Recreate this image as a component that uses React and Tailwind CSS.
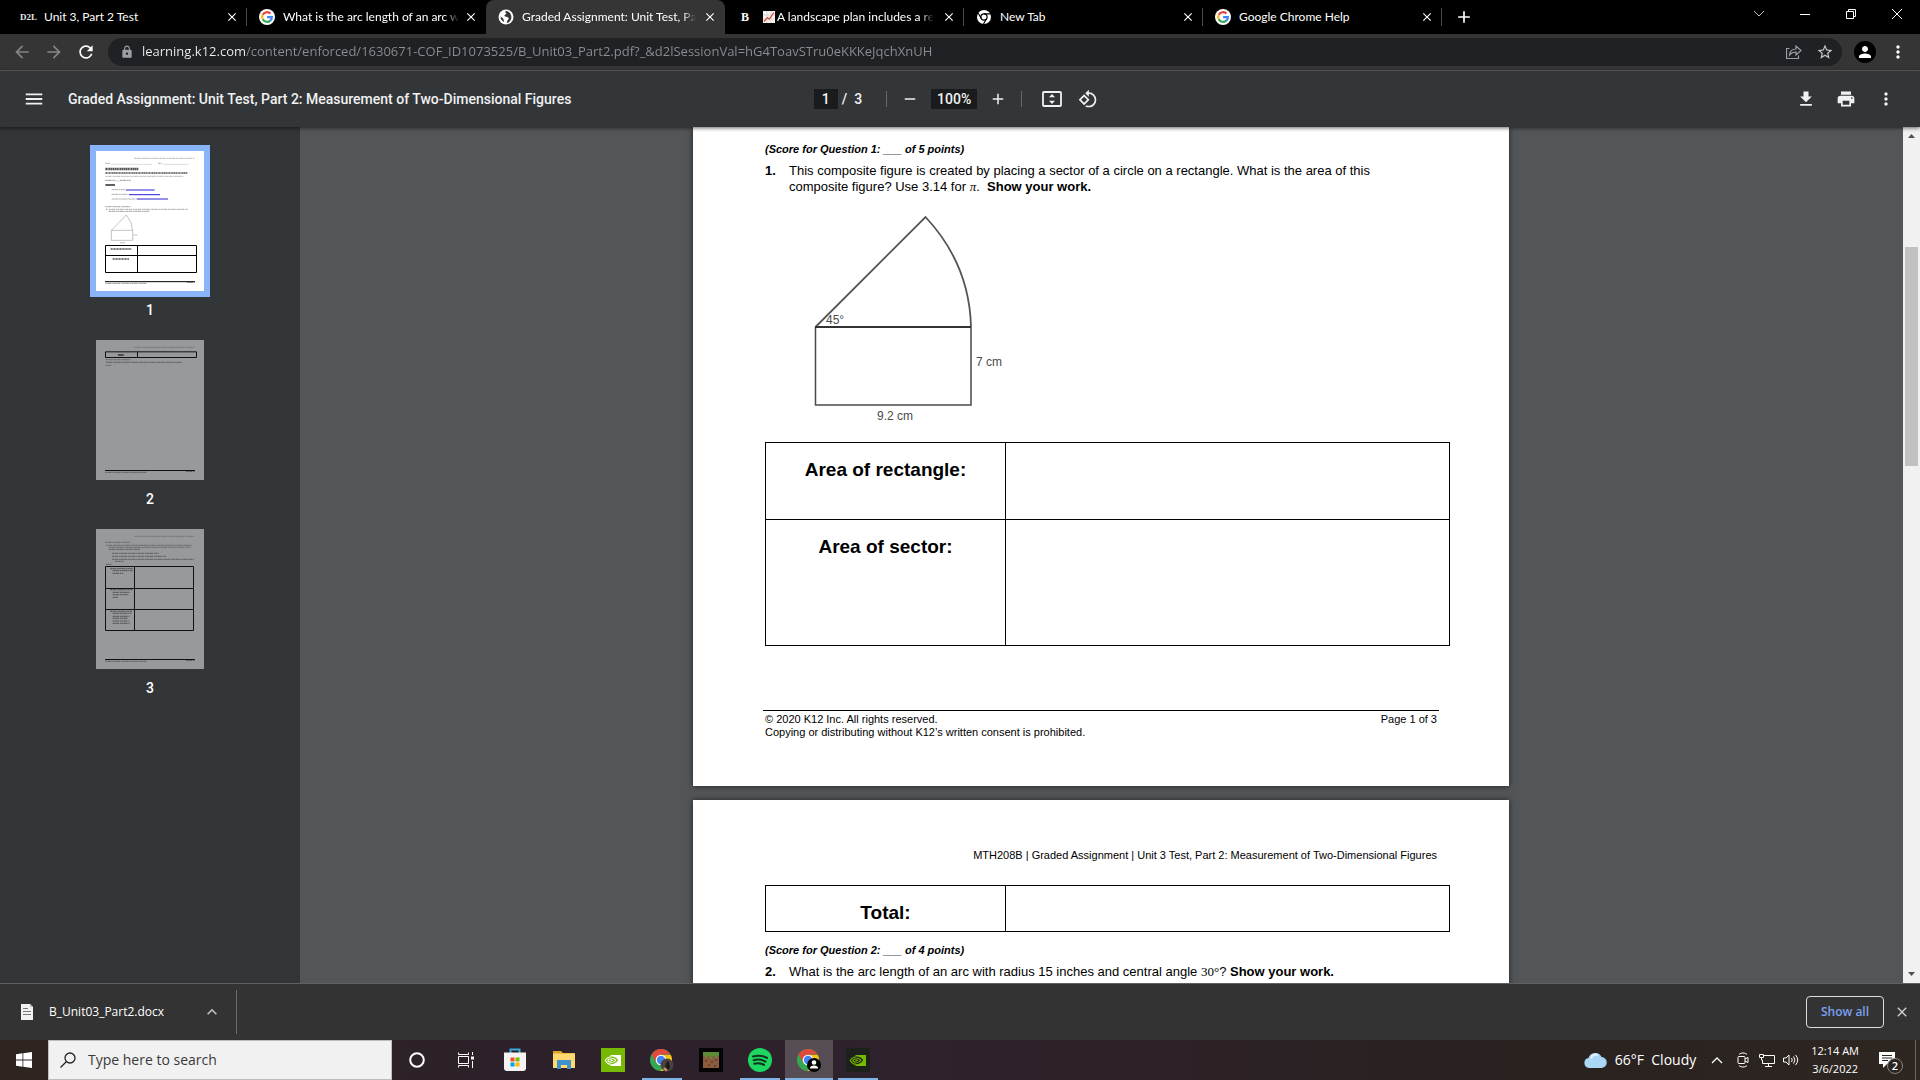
import React from "react";
import {
  MdAdd,
  MdArrowBack,
  MdArrowForward,
  MdClose,
  MdFileDownload,
  MdKeyboardArrowUp,
  MdLock,
  MdMenu,
  MdMoreVert,
  MdOutlineRotate90DegreesCcw,
  MdPerson,
  MdPrint,
  MdRefresh,
  MdRemove,
  MdStarBorder,
} from "react-icons/md";

const UI = "font-['Open_Sans','Noto_Sans',sans-serif]";
const DOC = "font-['Liberation_Sans',Arial,sans-serif]";
const ROBOTO = "font-[Roboto,sans-serif]";

/* ---------- favicons ---------- */

function GoogleIcon() {
  return (
    <svg viewBox="0 0 16 16" className="size-4 shrink-0" aria-hidden="true">
      <circle cx="8" cy="8" r="8" fill="#fff" />
      <g fill="none" strokeWidth="2.1">
        <path d="M11.5 4.6A4.9 4.9 0 0 0 3.7 5.7" stroke="#ea4335" />
        <path d="M3.7 5.7a4.9 4.9 0 0 0 0 4.6" stroke="#fbbc05" />
        <path d="M3.7 10.3a4.9 4.9 0 0 0 7.6 1.3" stroke="#34a853" />
        <path d="M11.3 11.6A4.9 4.9 0 0 0 12.9 8.1H8.1" stroke="#4285f4" />
      </g>
    </svg>
  );
}

function GlobeIcon() {
  return (
    <svg viewBox="0 0 16 16" className="size-4 shrink-0" aria-hidden="true">
      <circle cx="8" cy="8" r="7.5" fill="#fff" />
      <path
        d="M8.6 2c-2 .6-1.4 1.6-.5 2.2.8.6-.8 1.3-1.5 2.1-.6.8.3 1.3 1.4 1.4 1.8.1 2.9 1 2.6 2.3-.3 1.1-1.5 1.3-1.6 2.4l-.2 1.5c2.6-.4 4.6-2.6 4.6-5.6 0-3.2-2-5.7-4.8-6.3zM2.6 7.4c1.2 1 2.4 1.3 2.7 2.4.3 1.2.8 1.8.7 3.2-2.3-.9-3.7-3-3.400-5.600z"
        fill="#35363a"
      />
    </svg>
  );
}

function ChromeMono() {
  return (
    <svg viewBox="0 0 16 16" className="size-4 shrink-0" aria-hidden="true">
      <circle cx="8" cy="8" r="7" fill="#fff" />
      <circle cx="8" cy="8" r="3.1" fill="none" stroke="#000" strokeWidth="1.2" />
      <path d="M8 4.900h6.500M5.300 9.500 2.100 4M10.700 9.500 7.500 15" stroke="#000" strokeWidth="1.2" />
    </svg>
  );
}

function D2LIcon() {
  return (
    <span className="w-4 shrink-0 text-center font-['Liberation_Serif',serif] text-[9px] leading-4 font-bold text-gray-200">
      D2L
    </span>
  );
}

function BartlebyIcon() {
  return (
    <span className="w-4 shrink-0 text-center font-['Liberation_Serif',serif] text-xs leading-4 font-bold text-white">
      B
    </span>
  );
}

function ChartIcon() {
  return (
    <svg viewBox="0 0 12 12" className="mr-0.5 ml-0.5 inline-block size-3 align-[-2px]" aria-hidden="true">
      <rect width="12" height="12" fill="#f4f1ee" />
      <path d="M0 4h12M0 8h12M4 0v12M8 0v12" stroke="#c9cfd4" strokeWidth=".6" />
      <path d="m1 10.500 3.500-4 1.800 1.600L11 1.500" fill="none" stroke="#d8452f" strokeWidth="1.2" />
    </svg>
  );
}

/* ---------- browser frame ---------- */

const tabs = [
  { icon: <D2LIcon />, title: "Unit 3, Part 2 Test" },
  { icon: <GoogleIcon />, title: "What is the arc length of an arc w", fade: true },
  { icon: <GlobeIcon />, title: "Graded Assignment: Unit Test, Pa", active: true, fade: true },
  { icon: <BartlebyIcon />, title: "A landscape plan includes a re", emoji: true, fade: true },
  { icon: <ChromeMono />, title: "New Tab" },
  { icon: <GoogleIcon />, title: "Google Chrome Help" },
];

function Tab({ tab, divider }) {
  return (
    <div
      className={
        "flex h-full w-[239px] items-center pr-2 pl-3 " +
        (tab.active ? "rounded-t-lg bg-[#353535] " : "") +
        (divider ? "bg-[linear-gradient(#4a4a4a,#4a4a4a)] bg-[length:1px_18px] bg-right bg-no-repeat" : "")
      }
    >
      <button className="flex min-w-0 flex-1 items-center gap-2 text-left font-[Lato,'Open_Sans',sans-serif] text-xs text-white">
        {tab.icon}
        <span className={"whitespace-nowrap " + (tab.fade ? "mask-r-from-92%" : "")}>
          {tab.emoji && <ChartIcon />}
          {tab.title}
        </span>
      </button>
      <button aria-label={"Close " + tab.title} className="text-sm text-white">
        <MdClose />
      </button>
    </div>
  );
}

function TabStrip() {
  return (
    <header className="flex h-[34px] shrink-0 bg-black pl-2 text-white">
      {tabs.map((t, i) => (
        <Tab key={i} tab={t} divider={i !== 1 && i !== 2} />
      ))}
      <button aria-label="New tab" className="ml-3 text-xl">
        <MdAdd />
      </button>
      <div className="ml-auto flex h-7">
        <button aria-label="Search tabs" className="flex w-[46px] items-center justify-center">
          <svg viewBox="0 0 12 12" className="size-3" fill="none" stroke="#bbb">
            <path d="m1 3 5 5 5-5" />
          </svg>
        </button>
        <button aria-label="Minimize" className="flex w-[46px] items-center justify-center">
          <svg viewBox="0 0 10 10" className="size-2.5" fill="none" stroke="#fff">
            <path d="M0 5.500h10" />
          </svg>
        </button>
        <button aria-label="Restore" className="flex w-[46px] items-center justify-center">
          <svg viewBox="0 0 10 10" className="size-2.5" fill="none" stroke="#fff">
            <path d="M.5 2.500h7v7h-7zM2.500 2.500v-2h7v7h-2" />
          </svg>
        </button>
        <button aria-label="Close window" className="flex w-[46px] items-center justify-center">
          <svg viewBox="0 0 10 10" className="size-2.5" fill="none" stroke="#fff">
            <path d="m0 0 10 10M10 0 0 10" />
          </svg>
        </button>
      </div>
    </header>
  );
}

function AddressBar() {
  return (
    <div className="flex h-[37px] shrink-0 items-center border-b border-[#5f6163] bg-[#353535]">
      <div className="flex w-[108px] items-center gap-3 pl-3 text-xl">
        <button aria-label="Back" className="text-[#858585]">
          <MdArrowBack />
        </button>
        <button aria-label="Forward" className="text-[#858585]">
          <MdArrowForward />
        </button>
        <button aria-label="Reload" className="text-white">
          <MdRefresh />
        </button>
      </div>
      <div className="flex h-7 flex-1 items-center rounded-full bg-[#202124] pr-2 pl-3 text-[#9aa0a6]">
        <MdLock className="text-sm" />
        <input
          aria-label="Address"
          className="ml-2 flex-1 bg-[linear-gradient(to_right,#f1f3f4_104px,#8b8e92_104px)] bg-clip-text text-[13px] text-transparent outline-none"
          defaultValue="learning.k12.com/content/enforced/1630671-COF_ID1073525/B_Unit03_Part2.pdf?_&d2lSessionVal=hG4ToavSTru0eKKKeJqchXnUH"
        />
        <button aria-label="Share" className="mr-3.5">
          <svg viewBox="0 0 16 16" className="size-4" fill="none" stroke="currentColor" strokeWidth="1.2">
            <path d="M3.500 4.500h-3v10h12v-3" />
            <path d="M3.500 11c.3-4 2.500-6 6.500-6V2l5 4.500-5 4.500V8C7 8 5 9 3.500 11z" />
          </svg>
        </button>
        <button aria-label="Bookmark" className="text-lg text-[#c4c7ca]">
          <MdStarBorder />
        </button>
      </div>
      <button
        aria-label="Profile"
        className="ml-3 flex size-5.5 items-center justify-center rounded-full bg-black text-lg text-white"
      >
        <MdPerson />
      </button>
      <button aria-label="Chrome menu" className="mr-3 ml-3 text-xl text-white">
        <MdMoreVert />
      </button>
    </div>
  );
}

function PdfToolbar() {
  return (
    <div
      className={
        ROBOTO +
        " z-10 grid h-14 shrink-0 grid-cols-[1fr_auto_1fr] items-center bg-[#323639] text-sm font-medium text-[#f1f1f1] shadow-[0_1px_4px_rgba(0,0,0,0.6)]"
      }
    >
      <div className="flex items-center pl-[23px]">
        <button aria-label="Toggle sidebar" className="text-[22px]">
          <MdMenu />
        </button>
        <h1 className="ml-[23px]">Graded Assignment: Unit Test, Part 2: Measurement of Two-Dimensional Figures</h1>
      </div>
      <div className="flex items-center pr-2">
        <input aria-label="Page" className="h-5 w-6 bg-[#191b1c] text-center" defaultValue="1" />
        <span className="mr-6 ml-1">/&nbsp; 3</span>
        <span className="h-4 w-px bg-[#66696b]" />
        <button aria-label="Zoom out" className="ml-3.5 text-lg">
          <MdRemove />
        </button>
        <input aria-label="Zoom" className="mx-3 h-5 w-[46px] bg-[#191b1c] text-center" defaultValue="100%" />
        <button aria-label="Zoom in" className="mr-3.5 text-lg">
          <MdAdd />
        </button>
        <span className="h-4 w-px bg-[#66696b]" />
        <button aria-label="Fit to page" className="ml-5">
          <svg viewBox="0 0 20 16" className="h-4 w-5" fill="none" stroke="currentColor" strokeWidth="1.8">
            <rect x="1" y="1" width="18" height="14" rx="1" />
            <path d="m10 3 3 3.200H7zM10 13l3-3.200H7z" fill="currentColor" stroke="none" />
          </svg>
        </button>
        <button aria-label="Rotate" className="ml-4 text-xl">
          <MdOutlineRotate90DegreesCcw />
        </button>
      </div>
      <div className="flex justify-end gap-5 pr-6 text-xl">
        <button aria-label="Download">
          <MdFileDownload />
        </button>
        <button aria-label="Print">
          <MdPrint />
        </button>
        <button aria-label="More actions">
          <MdMoreVert />
        </button>
      </div>
    </div>
  );
}

/* ---------- thumbnails ---------- */

function TinyLines({ lines }) {
  return lines.map(([x1, x2, y, w, color, dash], i) => (
    <path
      key={i}
      d={`M${x1} ${y}H${x2}`}
      stroke={color || "#444"}
      strokeWidth={w || 2}
      strokeDasharray={dash || "7 1 11 2 4 1"}
    />
  ));
}

function Thumb1() {
  return (
    <svg viewBox="48 63 324 420" className="block w-full bg-white" fill="none">
      <TinyLines
        lines={[
          [162, 343, 85, 1.5, "#777"],
          [76, 90, 100, 2, "#888"],
          [94, 216, 103, 1, "#999", "none"],
          [234, 245, 100, 2, "#888"],
          [248, 326, 103, 1, "#999", "none"],
          [76, 176, 117, 7, "#555", "5 1 4 1"],
          [76, 323, 129, 5, "#555", "5 1 3 1"],
          [76, 311, 139, 2, "#999"],
          [76, 106, 151, 2, "#666"],
          [108, 118, 153, 1, "#777", "none"],
          [120, 152, 151, 2, "#666"],
          [76, 105, 165, 4, "#111", "none"],
          [95, 136, 179, 2, "#888"],
          [95, 145, 193, 2, "#888"],
          [95, 168, 207, 2, "#888"],
          [138, 224, 180, 3, "#2a20d0", "none"],
          [147, 240, 194, 3, "#2a20d0", "none"],
          [170, 264, 207, 3, "#2a20d0", "none"],
          [76, 152, 230, 2, "#777"],
          [78, 82, 238, 2, "#444"],
          [86, 324, 238, 2, "#888"],
          [86, 208, 244, 2, "#777"],
          [120, 135, 338, 2, "#999"],
          [160, 172, 315, 2, "#999"],
          [92, 154, 357, 5, "#555", "4 1 3 1"],
          [98, 148, 387, 5, "#555", "4 1 3 1"],
          [76, 200, 460, 2, "#666"],
          [320, 344, 457, 2, "#555"],
        ]}
      />
      <path d="M94 331v-30h64v30zM94 301l45-46q17 20 19 46" stroke="#888" strokeWidth="1.5" />
      <path d="M76.500 346.500h273v81h-273zM76 376.500h274M172.500 346v81" stroke="#000" strokeWidth="3" />
      <path d="M75 455h270" stroke="#000" strokeWidth="3" />
    </svg>
  );
}

function Thumb2() {
  return (
    <svg viewBox="48 30 324 420" className="block w-full bg-[#98999b]" fill="none">
      <TinyLines
        lines={[
          [163, 343, 52, 1.5, "#555"],
          [114, 131, 75, 4, "#222", "none"],
          [76, 152, 89, 2, "#555"],
          [78, 308, 97, 2, "#444"],
          [76, 94, 106, 2, "#555"],
          [76, 200, 427, 2, "#444"],
          [318, 344, 424, 2, "#333"],
        ]}
      />
      <path d="M76.500 65.500h273v17h-273zM172.500 65v17M75 421.500h270" stroke="#111" strokeWidth="3" />
    </svg>
  );
}

function Thumb3() {
  return (
    <svg viewBox="48 597 324 420" className="block w-full bg-[#98999b]" fill="none">
      <TinyLines
        lines={[
          [163, 343, 619, 1.5, "#555"],
          [76, 152, 637, 2, "#555"],
          [78, 336, 646, 2, "#555"],
          [86, 332, 652, 2, "#555"],
          [86, 180, 658, 2, "#444"],
          [96, 236, 670, 2, "#444"],
          [96, 258, 679, 2, "#444"],
          [96, 341, 688, 2, "#444"],
          [105, 132, 694, 2, "#444"],
          [78, 94, 703, 2, "#444"],
          [90, 158, 716, 2, "#333"],
          [98, 160, 722, 2, "#333"],
          [98, 130, 730, 2, "#333"],
          [90, 158, 779, 2, "#333"],
          [98, 150, 787, 2, "#333"],
          [98, 146, 794, 2, "#333"],
          [98, 114, 802, 2, "#333"],
          [90, 156, 844, 2, "#333"],
          [98, 154, 850, 2, "#333"],
          [98, 148, 859, 2, "#333"],
          [98, 142, 865, 2, "#333"],
          [98, 148, 873, 2, "#333"],
          [98, 150, 880, 2, "#333"],
          [76, 200, 994, 2, "#444"],
          [318, 344, 991, 2, "#333"],
        ]}
      />
      <path
        d="M76.500 709.500h264v192h-264zM76 775.500h265M76 838.500h265M163.500 709v192M75 988.500h270"
        stroke="#111"
        strokeWidth="3"
      />
    </svg>
  );
}

function Sidebar() {
  const thumbs = [Thumb1, Thumb2, Thumb3];
  return (
    <nav
      aria-label="Pages"
      className={ROBOTO + " flex w-[300px] shrink-0 flex-col items-center bg-[#323639] pt-[18px] text-sm font-medium text-white"}
    >
      {thumbs.map((Thumb, i) => (
        <button key={i} className="flex w-[120px] flex-col items-center gap-[3px] pb-3.5">
          <span className={"block w-full p-1.5 " + (i === 0 ? "bg-[#8ab4f8]" : "")}>
            <Thumb />
          </span>
          <span>{i + 1}</span>
        </button>
      ))}
    </nav>
  );
}

/* ---------- document ---------- */

function AnswerTable({ rows }) {
  return (
    <table className="w-[685px] border-collapse text-[19px] leading-6">
      <tbody>
        {rows.map(([label, height]) => (
          <tr key={label} className={height}>
            <th scope="row" className="w-[240px] border border-black pt-[15px] align-top font-bold">
              {label}
            </th>
            <td className="border border-black" />
          </tr>
        ))}
      </tbody>
    </table>
  );
}

function Figure() {
  return (
    <svg
      viewBox="0 0 200 220"
      className={DOC + " mt-[15px] ml-[46px] block h-[220px] w-[200px]"}
      fill="none"
      stroke="#4a4a4a"
      strokeWidth="1.5"
      role="img"
      aria-label="Sector on a rectangle"
    >
      <path d="M4.500 117 114.500 7q44 47 45.500 110" stroke="#555" strokeWidth="1.8" />
      <path d="M4.500 117v78H160v-78" />
      <path d="M4 117h156" stroke="#333" strokeWidth="2" />
      <g fill="#4a4a4a" stroke="none" fontSize="12">
        <text x="15" y="114">45°</text>
        <text x="165" y="156">7 cm</text>
        <text x="66" y="210">9.2 cm</text>
      </g>
    </svg>
  );
}

function Viewer() {
  return (
    <main className={DOC + " min-w-0 flex-1 overflow-hidden bg-[#525659] pr-px text-[13px] leading-4 text-black"}>
      <article className="mx-auto w-[816px] bg-white px-[72px] pt-3.5 pb-[47px] shadow-[0_0_6px_rgba(0,0,0,0.6)]">
        <p className="text-[11px] leading-4 font-bold italic">(Score for Question 1: ___ of 5 points)</p>
        <div className="mt-1.5 flex">
          <b className="w-6">1.</b>
          <p>
            This composite figure is created by placing a sector of a circle on a rectangle. What is the area of this
            <br />
            composite figure? Use 3.14 for <i className="font-['Liberation_Serif',serif]">π</i>.{" "}
            <b>&nbsp;Show your work.</b>
          </p>
        </div>
        <Figure />
        <div className="mt-3">
          <AnswerTable
            rows={[
              ["Area of rectangle:", "h-[77px]"],
              ["Area of sector:", "h-[126px]"],
            ]}
          />
        </div>
        <footer className="-mx-0.5 mt-16 flex justify-between border-t border-black px-0.5 pt-0.5 text-[11px] leading-[13px]">
          <p>
            © 2020 K12 Inc. All rights reserved.
            <br />
            Copying or distributing without K12’s written consent is prohibited.
          </p>
          <p>Page 1 of 3</p>
        </footer>
      </article>
      <article className="mx-auto mt-3.5 w-[816px] bg-white px-[72px] pt-[49px] pb-12 shadow-[0_0_6px_rgba(0,0,0,0.6)]">
        <p className="text-right text-[11px] leading-[13px]">
          MTH208B | Graded Assignment | Unit 3 Test, Part 2: Measurement of Two-Dimensional Figures
        </p>
        <div className="mt-[23px]">
          <AnswerTable rows={[["Total:", "h-[46px]"]]} />
        </div>
        <p className="mt-2.5 text-[11px] leading-4 font-bold italic">(Score for Question 2: ___ of 4 points)</p>
        <div className="mt-1.5 flex">
          <b className="w-6">2.</b>
          <p>
            What is the arc length of an arc with radius 15 inches and central angle{" "}
            <span className="font-['Liberation_Serif',serif]">30°</span>? <b>Show your work.</b>
          </p>
        </div>
      </article>
    </main>
  );
}

function Scrollbar() {
  return (
    <div className="flex w-[17px] shrink-0 flex-col items-center bg-[#f1f1f1]" aria-hidden="true">
      <svg viewBox="0 0 17 17" className="size-[17px] shrink-0" fill="#505050">
        <path d="M5 11h7L8.500 7z" />
      </svg>
      <div className="h-[12%] shrink-0" />
      <div className="h-[219px] w-[13px] bg-[#c1c1c1]" />
      <svg viewBox="0 0 17 17" className="mt-auto size-[17px] shrink-0" fill="#505050">
        <path d="M5 6h7l-3.500 4z" />
      </svg>
    </div>
  );
}

/* ---------- download shelf ---------- */

function DownloadShelf() {
  return (
    <div className="flex h-[57px] shrink-0 items-center border-t border-[#606060] bg-[#333] text-xs text-white">
      <div className="flex h-11 w-[237px] items-center border-r border-[#6b6b6b] pr-3.5 pl-5">
        <button className="flex flex-1 items-center gap-[15px] text-left">
          <svg viewBox="0 0 14 16" className="h-4 w-3.5" aria-hidden="true">
            <path d="M1 0h9l3 3v13H1z" fill="#f2f2f2" />
            <path d="M3 4.500h5M3 7.500h8M3 10.500h8" stroke="#777" />
            <path d="M10 0v3h3" fill="#bbb" />
          </svg>
          B_Unit03_Part2.docx
        </button>
        <button aria-label="Download options" className="text-xl text-[#bdbdbd]">
          <MdKeyboardArrowUp />
        </button>
      </div>
      <button className="mr-2.5 ml-auto h-8 w-[78px] rounded border border-[#dadce0] font-semibold text-[#7b9ff0]">
        Show all
      </button>
      <button aria-label="Close downloads" className="mr-2.5 text-base text-[#d0d0d0]">
        <MdClose />
      </button>
    </div>
  );
}

/* ---------- taskbar ---------- */

function ChromeColor({ children }) {
  return (
    <svg viewBox="0 0 24 24" className="size-6">
      <circle cx="11" cy="12" r="11" fill="#34a853" />
      <path d="M11 12 1.500 6.500A11 11 0 0 1 20.500 6.500H11z" fill="#e04a3c" />
      <path d="M1.500 6.500 6.200 14.800 11 12V6.500z" fill="#e04a3c" />
      <path d="M11 7h9.800A11 11 0 0 1 10.500 23L16 14z" fill="#fbc116" />
      <circle cx="11" cy="12" r="5.3" fill="#fff" />
      <circle cx="11" cy="12" r="4.2" fill="#4285f4" />
      {children}
    </svg>
  );
}

function NvidiaEye({ color, pupil }) {
  return (
    <>
      <path d="M9.500 7H20v11H9.500z" fill={color} />
      <g fill="none" strokeWidth="1.1">
        <path d="M9.500 9.200c3-.3 5.400 1 7 3-2 2.600-4 3.700-7 3.500" stroke={pupil} />
        <path d="M9.500 11c1.700-.1 2.800.4 3.800 1.400-1 1.200-2.200 1.700-3.800 1.600" stroke={pupil} />
        <path
          d="M9.500 8.700C7.300 9 5.400 10.300 4.200 12.200c1.200 2.400 3 3.800 5.300 4.200M9.500 10.800c-1.300.2-2.100.8-2.700 1.600.6 1.100 1.400 1.700 2.700 2"
          stroke={color}
        />
      </g>
    </>
  );
}

const apps = [
  {
    name: "Cortana",
    icon: (
      <svg viewBox="0 0 24 24" className="size-6">
        <circle cx="12" cy="12" r="6.8" fill="none" stroke="#fff" strokeWidth="2" />
      </svg>
    ),
  },
  {
    name: "Task View",
    icon: (
      <svg viewBox="0 0 16 16" className="size-4" fill="none" stroke="#fff">
        <path d="M.5 4.500h10v7H.5zM.5.500v2h10v-2M.5 15.500v-2h10v2M14.500 0v3M14.500 9v7" />
        <path d="M13 4.500h3v3h-3z" fill="#fff" stroke="none" />
      </svg>
    ),
  },
  {
    name: "Microsoft Store",
    icon: (
      <svg viewBox="0 0 24 24" className="size-6">
        <path d="M7.500 5V1.500h9V5" fill="none" stroke="#3ba8dd" strokeWidth="2" />
        <path d="M1 4.500h22V20a3 3 0 0 1-3 3H4a3 3 0 0 1-3-3z" fill="#f3f3f5" />
        <path d="M7.500 9.500h4v4h-4z" fill="#f25022" />
        <path d="M12.500 9.500h4v4h-4z" fill="#7fba00" />
        <path d="M7.500 14.500h4v4h-4z" fill="#00a4ef" />
        <path d="M12.500 14.500h4v4h-4z" fill="#ffb900" />
      </svg>
    ),
  },
  {
    name: "File Explorer",
    icon: (
      <svg viewBox="0 0 24 24" className="size-6">
        <path d="M1 3h8l2 2h12v4H1z" fill="#e0a526" />
        <path d="M1 5.500h22V20H1z" fill="#ffd86f" />
        <path d="M5 12h14v9h-4v-4H9v4H5z" fill="#3e93cf" />
      </svg>
    ),
  },
  {
    name: "NVIDIA Control Panel",
    icon: (
      <svg viewBox="0 0 24 24" className="size-6">
        <path d="M0 0h24v24H0z" fill="#76b900" />
        <NvidiaEye color="#fff" pupil="#76b900" />
      </svg>
    ),
  },
  {
    name: "Chrome",
    open: true,
    icon: (
      <ChromeColor>
        <circle cx="17" cy="17" r="6.5" fill="#4c423f" />
        <path d="m14 22 3-9 2 1 1 6-3 3z" fill="#1e1b1c" />
        <path d="m13 21 2-2 3 3-2 1.500z" fill="#c08a75" />
      </ChromeColor>
    ),
  },
  {
    name: "Minecraft",
    icon: (
      <svg viewBox="0 0 24 24" className="size-6">
        <path d="M0 0h24v24H0z" fill="#050505" />
        <path d="M4 4h16v16H4z" fill="#8a5c3d" />
        <path d="M4 4h16v4h-2v2h-2V8h-3v3h-2V8H8v2H6V8H4z" fill="#5d8a35" />
        <path d="M6 12h2v2H6zM12 13h2v2h-2zM16 11h2v2h-2zM9 16h2v2H9zM15 17h2v2h-2z" fill="#6a422a" />
      </svg>
    ),
  },
  {
    name: "Spotify",
    open: true,
    icon: (
      <svg viewBox="0 0 24 24" className="size-6">
        <circle cx="12" cy="12" r="12" fill="#1ed760" />
        <path
          d="M5 8.500c4.500-1.300 10-.9 14 1.400M5.700 12.200c4-1.100 8.300-.6 11.800 1.400M6.300 15.700c3.400-.9 6.800-.5 9.800 1.200"
          fill="none"
          stroke="#12331d"
          strokeWidth="2"
          strokeLinecap="round"
        />
      </svg>
    ),
  },
  {
    name: "Chrome, signed in",
    open: true,
    active: true,
    icon: (
      <ChromeColor>
        <circle cx="17" cy="17" r="7" fill="#000" />
        <circle cx="17" cy="14.5" r="2.3" fill="#fff" />
        <path d="M12.800 20.500c0-4 8.400-4 8.400 0z" fill="#fff" />
      </ChromeColor>
    ),
  },
  {
    name: "NVIDIA",
    open: true,
    icon: (
      <svg viewBox="0 0 24 24" className="size-6">
        <path d="M0 0h24v24H0z" fill="#1d211b" />
        <NvidiaEye color="#76b900" pupil="#1d211b" />
      </svg>
    ),
  },
];

function Taskbar() {
  return (
    <footer className="flex h-10 shrink-0 bg-[linear-gradient(90deg,#2e2520_0%,#2c2129_24%,#2e222d_48%,#29211f_78%,#2d2621_100%)] text-sm text-white">
      <button aria-label="Start" className="flex w-12 items-center justify-center">
        <svg viewBox="0 0 16 16" className="size-4" fill="#fff">
          <path d="M0 2.200 6.500 1.300v6.300H0zM7.300 1.200 16 0v7.600H7.300zM0 8.400h6.500v6.300L0 13.800zM7.300 8.400H16V16l-8.700-1.200z" />
        </svg>
      </button>
      <label className="flex w-[344px] items-center gap-3 border border-[#bdbdbd] bg-[#f1f1f1] pl-[11px]">
        <svg viewBox="0 0 16 16" className="size-4" fill="none" stroke="#222" strokeWidth="1.3">
          <circle cx="10" cy="6" r="5" />
          <path d="m6.500 9.500-6 6" />
        </svg>
        <input
          aria-label="Search"
          placeholder="Type here to search"
          className="flex-1 outline-none placeholder:text-[#3a3a3a]"
        />
      </label>
      <div className="ml-px flex gap-px">
        {apps.map((a) => (
          <button
            key={a.name}
            aria-label={a.name}
            className={"flex w-12 flex-col items-center justify-between " + (a.active ? "bg-[#574e55]" : "")}
          >
            <span className="h-0.5" />
            {a.icon}
            <span className={"h-0.5 " + (a.active ? "w-full " : "w-10 ") + (a.open ? "bg-[#7fb4e6]" : "")} />
          </button>
        ))}
      </div>
      <div className="ml-auto flex items-center">
        <button className="flex items-center gap-2">
          <svg viewBox="0 0 24 16" className="h-4 w-6" aria-hidden="true">
            <path d="M6 16a5 5 0 0 1-.5-9.900A7 7 0 0 1 18.500 5 5.500 5.500 0 0 1 18 16z" fill="#a9d7f6" />
            <path d="M8 6.500A5 5 0 0 1 15 3" fill="none" stroke="#e3f3fd" strokeWidth="2" />
          </svg>
          <span>66°F&nbsp; Cloudy</span>
        </button>
        <div className="ml-[15px] flex items-center gap-2">
          <button aria-label="Show hidden icons" className="mr-1">
            <svg viewBox="0 0 12 12" className="size-3" fill="none" stroke="#fff" strokeWidth="1.3">
              <path d="m1 9 5-5 5 5" />
            </svg>
          </button>
          <button aria-label="Meet now">
            <svg viewBox="0 0 16 16" className="size-4" fill="none" stroke="#fff">
              <rect x="3" y="4.5" width="7" height="7" rx="1" />
              <path d="m10 7 3-1.500v5L10 9M4 2.500c2-2 6-2 8 0M4 13.500c2 2 6 2 8 0" />
            </svg>
          </button>
          <button aria-label="Network">
            <svg viewBox="0 0 16 16" className="size-4" fill="none" stroke="#fff">
              <path d="M5 3.500h10.500v8H3.500V8M9.500 11.500V14M6 14.500h7M.5 2.500h4v3h-4zM2.500 5.500V8h1" />
            </svg>
          </button>
          <button aria-label="Volume">
            <svg viewBox="0 0 16 16" className="size-4" fill="none" stroke="#fff">
              <path d="M.5 6v4h2.500l3 3V3L3 6zM8.500 6q1.500 2 0 4M10.500 4.500q3 3.500 0 7M12.500 3q4.500 5 0 10" />
            </svg>
          </button>
        </div>
        <button className="ml-3 text-center text-[11px] leading-[18px]">
          12:14 AM
          <br />
          3/6/2022
        </button>
        <button aria-label="Notifications" className="relative mr-5 ml-5">
          <svg viewBox="0 0 16 16" className="size-4" fill="#fff">
            <path d="M0 0h16v12H8l-4 4v-4H0z" />
            <path d="M3 3.500h10M3 6h10M3 8.500h6" stroke="#2b2522" />
          </svg>
          <span className="absolute top-1.5 left-2 size-4 rounded-full border border-[#8a8583] bg-[#2b2522] text-[11px] leading-3.5 font-semibold">
            2
          </span>
        </button>
        <span className="mr-1 h-full w-px bg-[#6a6561]" />
      </div>
    </footer>
  );
}

export default function App() {
  return (
    <div className={UI + " flex h-screen flex-col overflow-hidden"}>
      <TabStrip />
      <AddressBar />
      <PdfToolbar />
      <div className="flex min-h-0 flex-1">
        <Sidebar />
        <Viewer />
        <Scrollbar />
      </div>
      <DownloadShelf />
      <Taskbar />
    </div>
  );
}
